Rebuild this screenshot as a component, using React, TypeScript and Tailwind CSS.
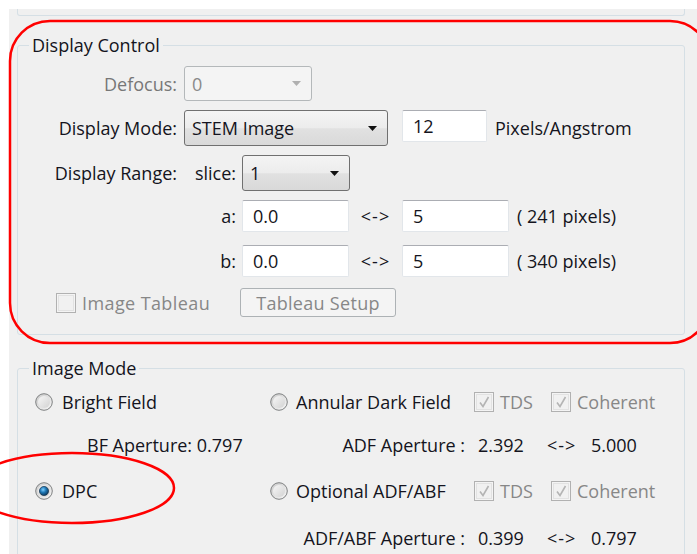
import React, { useId } from "react";

const DIM = "text-[#878787]";

function Arrow({ color }: { color: string }) {
  return (
    <svg width="9" height="5" viewBox="0 0 9 5">
      <polygon points="0,0 9,0 4.5,5" fill={color} />
    </svg>
  );
}

function Combo({
  text,
  className,
  disabled,
}: {
  text: string;
  className: string;
  disabled?: boolean;
}) {
  return (
    <div
      className={
        "flex items-center justify-between rounded-[3px] border pl-[7px] pr-[10px] " +
        (disabled
          ? "border-[#b4b8ba] bg-[#f4f4f4] text-[#8a8a8a] "
          : "border-[#707070] bg-[linear-gradient(to_bottom,#f4f4f4_0%,#ececec_50%,#e1e1e1_52%,#d9d9d9_100%)] ") +
        className
      }
    >
      <span>{text}</span>
      <Arrow color={disabled ? "#b0b0b0" : "#111111"} />
    </div>
  );
}

function TextBox({ value, className }: { value: string; className: string }) {
  return (
    <div
      className={
        "flex items-center rounded-[2px] border border-[#e2e6ea] border-t-[#abadb3] bg-white pl-[10px] " +
        className
      }
    >
      {value}
    </div>
  );
}

function Radio({ checked }: { checked?: boolean }) {
  const id = useId().replace(/:/g, "");
  return (
    <svg width="18" height="18" viewBox="0 0 18 18" className="shrink-0">
      <defs>
        <linearGradient id={`o${id}`} x1="0" y1="0" x2="1" y2="1">
          <stop offset="0" stopColor="#c9c9c9" />
          <stop offset="1" stopColor="#f7f7f7" />
        </linearGradient>
        <linearGradient id={`i${id}`} x1="0" y1="0" x2="1" y2="1">
          <stop offset="0" stopColor="#f7f7f7" />
          <stop offset="1" stopColor="#d2d2d2" />
        </linearGradient>
        <radialGradient id={`d${id}`} cx="0.4" cy="0.35" r="0.7">
          <stop offset="0" stopColor="#7fd0ff" />
          <stop offset="0.45" stopColor="#1e78b6" />
          <stop offset="1" stopColor="#0a3150" />
        </radialGradient>
      </defs>
      <circle cx="9" cy="9" r="8.3" fill={`url(#o${id})`} stroke="#7f8182" strokeWidth="1" />
      <circle cx="9" cy="9" r="6" fill={`url(#i${id})`} />
      {checked && <circle cx="9" cy="9" r="4.6" fill={`url(#d${id})`} stroke="#17354f" strokeWidth="0.7" />}
    </svg>
  );
}

function Check({ checked }: { checked?: boolean }) {
  return (
    <svg width="20" height="20" viewBox="0 0 20 20" className="shrink-0">
      <rect x="0.5" y="0.5" width="19" height="19" fill="#f4f4f4" stroke="#b1b1b1" />
      <rect x="2.5" y="2.5" width="15" height="15" fill="#f1f1f1" stroke="#e2e2e2" />
      {checked && (
        <path d="M6 10.5 L9 14.5 L14.5 5" fill="none" stroke="#b4b4b4" strokeWidth="1.6" />
      )}
    </svg>
  );
}

function RangeRow({ axis, px, className }: { axis: string; px: string; className: string }) {
  return (
    <div className={"flex h-[32px] items-center " + className}>
      <span className="w-[218px] text-right">{axis}:</span>
      <TextBox value="0.0" className="ml-[6px] h-[32px] w-[107px]" />
      <span className="w-[53px] text-center tracking-[1px]">&lt;-&gt;</span>
      <TextBox value="5" className="h-[32px] w-[107px]" />
      <span className="ml-[8px]">( {px} pixels)</span>
    </div>
  );
}

function DetectorRow({
  left,
  right,
  leftChecked,
  className,
}: {
  left: string;
  right: string;
  leftChecked?: boolean;
  className: string;
}) {
  return (
    <div className={"flex h-[30px] items-center " + className}>
      <div className="flex w-[252px] items-center pl-[17px]">
        <Radio checked={leftChecked} />
        <span className="ml-[9px]">{left}</span>
      </div>
      <div className="flex w-[204px] items-center">
        <Radio />
        <span className="ml-[8px]">{right}</span>
      </div>
      <div className="flex w-[77px] items-center">
        <Check checked />
        <span className={"ml-[6px] " + DIM}>TDS</span>
      </div>
      <div className="flex items-center">
        <Check checked />
        <span className={"ml-[6px] " + DIM}>Coherent</span>
      </div>
    </div>
  );
}

function ApertureRow({
  left,
  label,
  from,
  to,
  className,
}: {
  left: string;
  label: string;
  from: string;
  to: string;
  className: string;
}) {
  return (
    <div className={"flex h-[30px] items-center " + className}>
      <div className="w-[252px] pl-[69px]">{left}</div>
      <span className="w-[195px] text-right">{label}</span>
      <span className="ml-[13px] w-[69px]">{from}</span>
      <span className="w-[44px] tracking-[1px]">&lt;-&gt;</span>
      <span>{to}</span>
    </div>
  );
}

export default function App() {
  return (
    <div className="relative h-[554px] w-[697px] overflow-hidden bg-white font-['Open_Sans',sans-serif] text-[18px] leading-[24px] text-[#141420]">
      <div className="ml-[9px] mt-[9px] h-[545px] w-[688px] bg-[#f0f0f0] pl-[8px]">
        {/* tail of the group above */}
        <div className="h-[7px] w-[668px] rounded-b-[3px] border-x border-b border-[#d5dfe5]" />

        <fieldset className="mt-[17px] w-[668px] rounded-[3px] border border-[#d5dfe5] pb-[17px]">
          <legend className="ml-[11px] px-[3px]">Display Control</legend>

          <div className="mt-[9px] flex h-[35px] items-center">
            <span className="w-[159px] text-right text-[#777777]">Defocus:</span>
            <Combo disabled text="0" className="ml-[7px] h-[35px] w-[128px]" />
          </div>

          <div className="mt-[9px] flex h-[36px] items-start">
            <span className="w-[159px] self-center text-right">Display Mode:</span>
            <Combo text="STEM Image" className="ml-[7px] h-[36px] w-[204px]" />
            <TextBox value="12" className="ml-[14px] h-[32px] w-[85px]" />
            <span className="ml-[8px] self-center">Pixels/Angstrom</span>
          </div>

          <div className="mt-[9px] flex h-[36px] items-center">
            <span className="w-[159px] text-right">Display Range:</span>
            <span className="w-[59px] text-right">slice:</span>
            <Combo text="1" className="ml-[6px] h-[36px] w-[108px] pr-[9px]" />
          </div>

          <RangeRow axis="a" px="241" className="mt-[9px]" />
          <RangeRow axis="b" px="340" className="mt-[13px]" />

          <div className="mt-[11px] flex h-[29px] items-center">
            <div className="flex w-[222px] items-center pl-[38px]">
              <Check />
              <span className={"ml-[6px] tracking-[0.4px] " + DIM}>Image Tableau</span>
            </div>
            <div className="flex h-[29px] w-[156px] items-center justify-center rounded-[3px] border border-[#adb2b5] bg-[#f4f4f4] tracking-[0.3px] text-[#878787]">
              Tableau Setup
            </div>
          </div>
        </fieldset>

        <fieldset className="mt-[21px] h-[300px] w-[668px] rounded-[3px] border border-[#d5dfe5]">
          <legend className="ml-[11px] px-[3px]">Image Mode</legend>

          <DetectorRow left="Bright Field" right="Annular Dark Field" className="mt-[7px]" />
          <ApertureRow
            left="BF Aperture: 0.797"
            label="ADF Aperture :"
            from="2.392"
            to="5.000"
            className="mt-[13px]"
          />
          <DetectorRow left="DPC" right="Optional ADF/ABF" leftChecked className="mt-[16px]" />
          <ApertureRow
            left=""
            label="ADF/ABF Aperture :"
            from="0.399"
            to="0.797"
            className="mt-[17px]"
          />
        </fieldset>
      </div>

      {/* hand-drawn red call-outs */}
      <svg
        className="pointer-events-none absolute left-0 top-0"
        width="697"
        height="554"
        viewBox="0 0 697 554"
      >
        <rect x="10" y="21" width="700" height="322" rx="40" fill="none" stroke="#ff0000" strokeWidth="2.5" />
        <ellipse cx="72" cy="488" rx="102" ry="35" fill="none" stroke="#ff0000" strokeWidth="2.5" />
      </svg>
    </div>
  );
}
